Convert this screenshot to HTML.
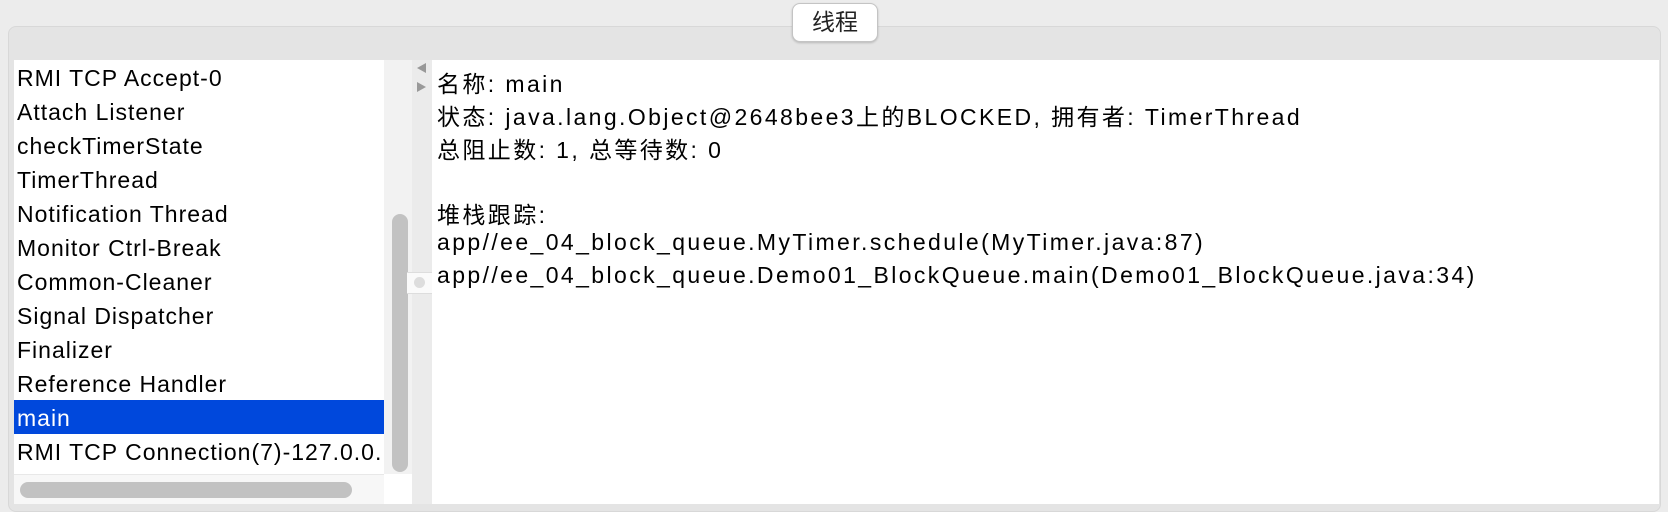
<!DOCTYPE html>
<html><head><meta charset="utf-8"><style>
body{margin:0;width:1668px;height:512px;background:#ececec;position:relative;overflow:hidden;font-family:"Liberation Sans","Noto Sans CJK SC",sans-serif;}
.panel{position:absolute;left:8px;top:26px;width:1653px;height:486px;background:#e4e4e4;border:1px solid #d8d8d8;border-radius:8px;box-sizing:border-box;}
.title{position:absolute;left:792px;top:3px;width:86px;height:39px;background:#fff;border:1px solid #c4c4c4;border-radius:8px;box-sizing:border-box;box-shadow:0 1px 2px rgba(0,0,0,.2);font-size:23px;text-align:center;line-height:37px;color:#222;}
.list{position:absolute;left:14px;top:60px;width:370px;height:414px;background:#fff;overflow:hidden;}
.row{height:34px;line-height:36px;font-size:23px;padding-left:3px;white-space:nowrap;color:#000;letter-spacing:1px;}
.sel{background:#0048dc;color:#fff;}
.vtrack{position:absolute;left:384px;top:60px;width:28px;height:414px;background:#f2f2f2;}
.vthumb{position:absolute;left:392px;top:214px;width:16px;height:258px;background:#c2c2c2;border-radius:8px;}
.htrack{position:absolute;left:14px;top:474px;width:370px;height:30px;background:#f7f7f7;border-top:1px solid #e8e8e8;box-sizing:border-box;}
.hthumb{position:absolute;left:20px;top:482px;width:332px;height:16px;background:#c2c2c2;border-radius:8px;}
.corner{position:absolute;left:384px;top:474px;width:28px;height:30px;background:#fff;}
.div{position:absolute;left:412px;top:60px;width:20px;height:444px;background:#ebebeb;}
.right{position:absolute;left:432px;top:60px;width:1227px;height:444px;background:#fff;}
.txt{position:absolute;left:437px;font-size:23px;white-space:nowrap;color:#000;letter-spacing:2.4px;}
</style></head><body>
<div class="panel"></div>
<div class="title">线程</div>
<div class="list">
<div class="row">RMI TCP Accept-0</div>
<div class="row">Attach Listener</div>
<div class="row">checkTimerState</div>
<div class="row">TimerThread</div>
<div class="row">Notification Thread</div>
<div class="row">Monitor Ctrl-Break</div>
<div class="row">Common-Cleaner</div>
<div class="row">Signal Dispatcher</div>
<div class="row">Finalizer</div>
<div class="row">Reference Handler</div>
<div class="row sel">main</div>
<div class="row">RMI TCP Connection(7)-127.0.0.1</div>
</div>
<div class="vtrack"></div><div class="vthumb"></div>
<div class="htrack"></div><div class="hthumb"></div><div class="corner"></div>
<div class="div">
<svg width="20" height="40" style="position:absolute;left:0;top:0"><polygon points="14,3 14,13 5,8" fill="#999"/><polygon points="5,22 5,32 14,27" fill="#999"/></svg>
<div style="position:absolute;left:-5px;top:212px;width:25px;height:20px;background:#fafafa;border-top:1px solid #ddd;border-bottom:1px solid #ddd;"></div>
<div style="position:absolute;left:2px;top:217px;width:11px;height:11px;border-radius:50%;background:#ddd;"></div>
</div>
<div class="right"></div>
<div class="txt" style="top:65px">名称: main</div>
<div class="txt" style="top:98px">状态: java.lang.Object@2648bee3上的BLOCKED, 拥有者: TimerThread</div>
<div class="txt" style="top:131px">总阻止数: 1, 总等待数: 0</div>
<div class="txt" style="top:196px">堆栈跟踪:</div>
<div class="txt" style="top:229px">app//ee_04_block_queue.MyTimer.schedule(MyTimer.java:87)</div>
<div class="txt" style="top:262px">app//ee_04_block_queue.Demo01_BlockQueue.main(Demo01_BlockQueue.java:34)</div>
</body></html>
